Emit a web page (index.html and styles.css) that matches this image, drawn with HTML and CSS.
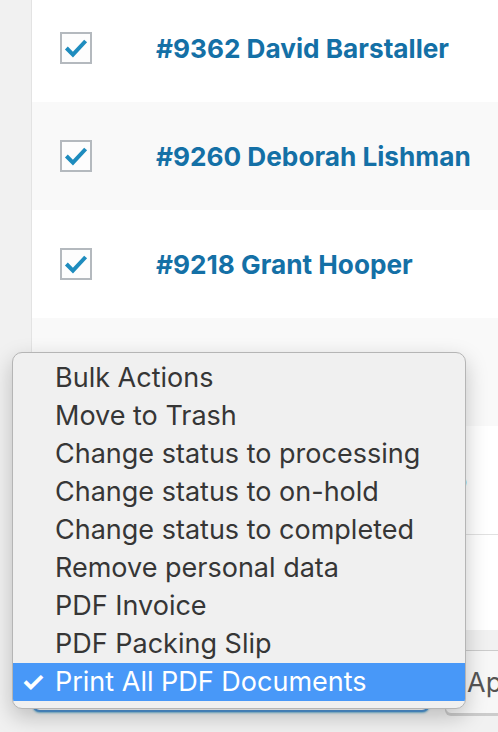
FILE: index.html
```html
<!DOCTYPE html>
<html>
<head>
<meta charset="utf-8">
<link rel="stylesheet" href="styles.css">
</head>
<body>
<div class="page">
  <div class="table">
    <div class="row">
      <span class="cb"><svg viewBox="0 0 32 32" width="30" height="30"><path d="M5 16 L12.5 23.5 L27 8" fill="none" stroke="#1e8cbe" stroke-width="4.6"/></svg></span>
      <a class="title">#9362 David Barstaller</a>
    </div>
    <div class="row">
      <span class="cb"><svg viewBox="0 0 32 32" width="30" height="30"><path d="M5 16 L12.5 23.5 L27 8" fill="none" stroke="#1e8cbe" stroke-width="4.6"/></svg></span>
      <a class="title">#9260 Deborah Lishman</a>
    </div>
    <div class="row">
      <span class="cb"><svg viewBox="0 0 32 32" width="30" height="30"><path d="M5 16 L12.5 23.5 L27 8" fill="none" stroke="#1e8cbe" stroke-width="4.6"/></svg></span>
      <a class="title">#9218 Grant Hooper</a>
    </div>
    <div class="row">
      <span class="cb"><svg viewBox="0 0 32 32" width="30" height="30"><path d="M5 16 L12.5 23.5 L27 8" fill="none" stroke="#1e8cbe" stroke-width="4.6"/></svg></span>
      <a class="title">#9204 Mark Robertson</a>
    </div>
    <div class="row">
      <span class="cb"><svg viewBox="0 0 32 32" width="30" height="30"><path d="M5 16 L12.5 23.5 L27 8" fill="none" stroke="#1e8cbe" stroke-width="4.6"/></svg></span>
      <a class="title">#9187 Jessie Brandolino</a>
    </div>
    <div class="foot"></div>
  </div>
  <div class="actions">
    <div class="select">Print All PDF Documents</div>
    <button class="apply">Apply</button>
  </div>
</div>

<ul class="menu">
  <li>Bulk Actions</li>
  <li>Move to Trash</li>
  <li>Change status to processing</li>
  <li>Change status to on-hold</li>
  <li>Change status to completed</li>
  <li>Remove personal data</li>
  <li>PDF Invoice</li>
  <li>PDF Packing Slip</li>
  <li class="sel"><span class="tick">✓</span>Print All PDF Documents</li>
</ul>
</body>
</html>
```
FILE: styles.css
```css
html, body {
  margin: 0;
  padding: 0;
  background: #f1f1f1;
  width: 498px;
  height: 732px;
  overflow: hidden;
  font-family: "Inter", "Liberation Sans", sans-serif;
}

.page {
  padding-left: 32px;
}

.table {
  margin-top: -6px;
  background: #fff;
  box-shadow: -1px 0 0 #e3e3e3;
}

.row {
  height: 108px;
  display: flex;
  align-items: center;
  background: #fff;
}

.row:nth-child(even) {
  background: #f9f9f9;
}

.cb {
  box-sizing: border-box;
  width: 32px;
  height: 32px;
  margin-left: 28px;
  border: 2px solid #b4b9be;
  background: #fdfdfd;
  display: flex;
  align-items: center;
  justify-content: center;
}

.title {
  margin-left: 64px;
  font-size: 26.2px;
  font-weight: 700;
  color: #1470a6;
  white-space: nowrap;
}

.foot {
  height: 96px;
  border-top: 1px solid #e1e1e1;
  box-sizing: border-box;
  background: #fff;
}

.actions {
  display: flex;
  align-items: flex-start;
  margin-top: 20px;
  gap: 15px;
}

.select {
  flex-shrink: 0;
  box-sizing: border-box;
  width: 398px;
  height: 62px;
  border: 2px solid #4f94d4;
  border-radius: 8px;
  background: #fff;
  box-shadow: 0 1px 2px rgba(30,140,190,0.6);
  font-size: 26px;
  line-height: 58px;
  padding-left: 20px;
  color: #333;
}

.apply {
  flex-shrink: 0;
  box-sizing: border-box;
  height: 64px;
  width: 120px;
  border: 1px solid #ccc;
  border-radius: 6px;
  background: #f7f7f7;
  box-shadow: 0 2px 0 #ccc;
  font-family: "Inter", "Liberation Sans", sans-serif;
  font-size: 27px;
  color: #555;
  text-align: left;
  padding: 0 0 0 21px;
}

.menu {
  position: absolute;
  left: 12px;
  top: 352px;
  width: 454px;
  height: 357px;
  box-sizing: border-box;
  margin: 0;
  padding: 6px 0;
  list-style: none;
  background: #f0f0f0;
  border: 1px solid #b5b5b5;
  border-radius: 10px;
  box-shadow: 0 8px 22px rgba(0,0,0,0.22);
  overflow: hidden;
}

.menu li {
  position: relative;
  height: 38px;
  line-height: 38px;
  padding-left: 42px;
  font-size: 27px;
  color: #363636;
  white-space: nowrap;
}

.menu li.sel {
  background: #4898f8;
  color: #fff;
}

.tick {
  position: absolute;
  left: 8px;
  top: 0;
  font-size: 27px;
  font-weight: 700;
}
```
